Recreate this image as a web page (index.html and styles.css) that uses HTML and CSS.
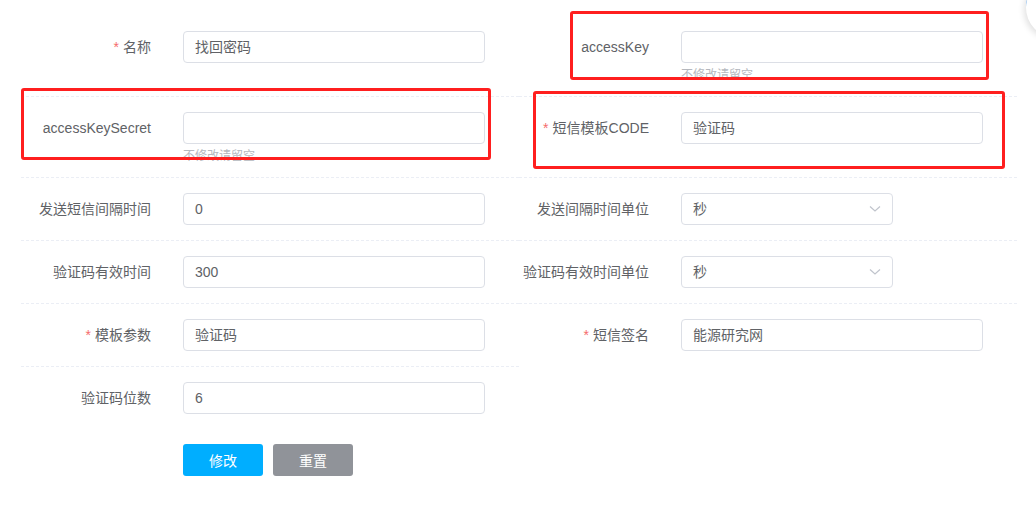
FILE: index.html
```html
<!DOCTYPE html>
<html lang="zh-CN">
<head>
<meta charset="utf-8">
<title>短信配置</title>
<link rel="stylesheet" href="styles.css">
</head>
<body>
<div class="page">
  <form class="form">
    <div class="item">
      <label class="label"><span class="req">*</span>名称</label>
      <div class="field"><div class="input">找回密码</div></div>
    </div>
    <div class="item">
      <label class="label">accessKey</label>
      <div class="field"><div class="input"></div><div class="help">不修改请留空</div></div>
    </div>
    <div class="item">
      <label class="label">accessKeySecret</label>
      <div class="field"><div class="input"></div><div class="help">不修改请留空</div></div>
    </div>
    <div class="item">
      <label class="label"><span class="req">*</span>短信模板CODE</label>
      <div class="field"><div class="input">验证码</div></div>
    </div>
    <div class="item">
      <label class="label">发送短信间隔时间</label>
      <div class="field"><div class="input">0</div></div>
    </div>
    <div class="item">
      <label class="label">发送间隔时间单位</label>
      <div class="field"><div class="input select">秒<svg class="arrow" width="12" height="8" viewBox="0 0 12 8"><polyline points="1,1.5 6,6 11,1.5" fill="none" stroke="#c0c4cc" stroke-width="1.2"/></svg></div></div>
    </div>
    <div class="item">
      <label class="label">验证码有效时间</label>
      <div class="field"><div class="input">300</div></div>
    </div>
    <div class="item">
      <label class="label">验证码有效时间单位</label>
      <div class="field"><div class="input select">秒<svg class="arrow" width="12" height="8" viewBox="0 0 12 8"><polyline points="1,1.5 6,6 11,1.5" fill="none" stroke="#c0c4cc" stroke-width="1.2"/></svg></div></div>
    </div>
    <div class="item">
      <label class="label"><span class="req">*</span>模板参数</label>
      <div class="field"><div class="input">验证码</div></div>
    </div>
    <div class="item last">
      <label class="label"><span class="req">*</span>短信签名</label>
      <div class="field"><div class="input">能源研究网</div></div>
    </div>
    <div class="item last">
      <label class="label">验证码位数</label>
      <div class="field"><div class="input">6</div></div>
    </div>
    <div class="item last"></div>
    <div class="actions">
      <button type="button" class="btn primary">修改</button>
      <button type="button" class="btn info">重置</button>
    </div>
  </form>
  <div class="mark mark-1"></div>
  <div class="mark mark-2"></div>
  <div class="mark mark-3"></div>
  <div class="float-ball"></div>
</div>
</body>
</html>
```

FILE: styles.css
```css
html, body {
  margin: 0;
  padding: 0;
  background: #ffffff;
}
body {
  font-family: "Liberation Sans", "Noto Sans CJK SC", sans-serif;
  font-size: 14px;
  color: #606266;
  overflow: hidden;
}
.page {
  position: relative;
  width: 1036px;
  height: 506px;
  overflow: hidden;
}
.form {
  width: 996px;
  margin-left: 21px;
  padding-top: 16px;
  display: grid;
  grid-template-columns: 498px 498px;
}
.item {
  display: flex;
  align-items: flex-start;
  padding: 15px 0;
  border-bottom: 1px dashed #ebeef5;
}
.item.last {
  border-bottom: none;
}
.label {
  width: 130px;
  margin-right: 32px;
  text-align: right;
  line-height: 32px;
  white-space: nowrap;
}
.req {
  color: #f56c6c;
  margin-right: 4px;
}
.field {
  width: 302px;
}
.input {
  box-sizing: border-box;
  height: 32px;
  line-height: 30px;
  border: 1px solid #dcdfe6;
  border-radius: 4px;
  padding: 0 11px;
  color: #606266;
  background: #fff;
}
.input.select {
  width: 212px;
  display: flex;
  align-items: center;
  justify-content: space-between;
}
.arrow {
  margin-right: 0;
}
.help {
  font-size: 12px;
  line-height: 12px;
  padding-top: 6px;
  color: #b5b8be;
}
.actions {
  grid-column: 1 / span 2;
  display: flex;
  gap: 10px;
  padding: 15px 0 0 162px;
}
.btn {
  width: 80px;
  height: 32px;
  border: none;
  border-radius: 3px;
  color: #fff;
  font-family: "Liberation Sans", "Noto Sans CJK SC", sans-serif;
  font-size: 14px;
  padding: 0;
}
.btn.primary {
  background: #00aeff;
}
.btn.info {
  background: #909399;
}
.mark {
  position: absolute;
  box-sizing: border-box;
  border: 3px solid #ff1f1f;
  border-radius: 3px;
}
.mark-1 {
  left: 570px;
  top: 11px;
  width: 419px;
  height: 69px;
}
.mark-2 {
  left: 21px;
  top: 88px;
  width: 470px;
  height: 72px;
}
.mark-3 {
  left: 533px;
  top: 91px;
  width: 472px;
  height: 78px;
}
.float-ball {
  position: absolute;
  left: 1026px;
  top: -22px;
  width: 56px;
  height: 56px;
  border-radius: 50%;
  background: #fff;
  border-top: 3px solid #2a8cf0;
  box-shadow: -2px 2px 6px rgba(0, 0, 0, 0.12);
}
```
